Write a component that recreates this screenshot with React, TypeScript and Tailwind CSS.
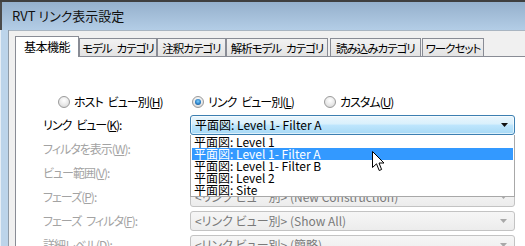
import React from 'react';

const jp = "font-['Noto_Sans_CJK_JP','Noto_Sans',sans-serif] [font-feature-settings:'palt']";

interface Tab {
  label: string;
  cls: string;
  active?: boolean;
}

const tabs: Tab[] = [
  { label: '基本機能', cls: 'w-[64px]', active: true },
  { label: 'モデル カテゴリ', cls: 'w-[78px]' },
  { label: '注釈カテゴリ', cls: 'w-[69px]' },
  { label: '解析モデル カテゴリ', cls: 'w-[102px]' },
  { label: '読み込みカテゴリ', cls: 'w-[91px] ml-[2px]' },
  { label: 'ワークセット', cls: 'w-[62px] ml-[1px]' },
];

const listItems = [
  '平面図: Level 1',
  '平面図: Level 1- Filter A',
  '平面図: Level 1- Filter B',
  '平面図: Level 2',
  '平面図: Site',
];

// tight kana text keeps a visible gap where the label has a space
const Spaced = ({ text }: { text: string }) => (
  <>
    {text.split(' ').map((part, i) => (
      <React.Fragment key={i}>
        {i > 0 && <span className="inline-block w-[5px]" />}
        {part}
      </React.Fragment>
    ))}
  </>
);

const Radio = ({ checked, label, keyChar, width }: { checked?: boolean; label: string; keyChar: string; width: string }) => (
  <div className={`flex items-center ${width}`}>
    <span className="w-[12px] h-[12px] rounded-full border border-[#9a9a9a] bg-[radial-gradient(circle_at_50%_35%,#ffffff_0%,#e8e8e8_55%,#cfcfcf_100%)] flex items-center justify-center shrink-0">
      {checked && (
        <span className="w-[6px] h-[6px] rounded-full bg-[radial-gradient(circle_at_50%_40%,#7fd0ff_0%,#2a7fc6_55%,#0f3e6e_100%)]" />
      )}
    </span>
    <span className="ml-[4px] leading-[13px] tracking-[-1px] whitespace-nowrap">
      <Spaced text={label} />(<u>{keyChar}</u>)
    </span>
  </div>
);

const Label = ({ text, keyChar, disabled }: { text: string; keyChar: string; disabled?: boolean }) => (
  <div className={`w-[147px] leading-[20px] tracking-[-1px] whitespace-nowrap ${disabled ? 'text-[#a3a3a3]' : 'text-black'}`}>
    <Spaced text={text} />(<u>{keyChar}</u>):
  </div>
);

const DisabledCombo = ({ text }: { text: string }) => (
  <div className="w-[325px] h-[20px] rounded-[3px] border border-[#c3c3c3] bg-[linear-gradient(to_bottom,#f6f6f6,#ececec)] flex items-center pl-[4px] pr-[6px] text-[#7a7a7a]">
    <span className="flex-1 leading-[18px] whitespace-nowrap">{text}</span>
    <svg width="8" height="5" viewBox="0 0 8 5">
      <path d="M0 0 H7 L3.5 4 Z" fill="#a8a8a8" />
    </svg>
  </div>
);

const Row = ({ children }: { children: React.ReactNode }) => <div className="flex h-[20px]">{children}</div>;

export default function App() {
  return (
    <div className={`w-[525px] h-[246px] overflow-hidden bg-[#f0f0f0] text-[12px] text-black relative ${jp}`}>
      {/* title bar */}
      <div className="h-[2px] bg-[#3f3f3f]" />
      <div className="h-[28px] bg-[linear-gradient(to_bottom,#95b0cc,#b3cde6)] border-l-2 border-[#4a4a4a] flex items-center pl-[10px]">
        <span className="text-[13px] leading-[16px] text-[#111]">RVT リンク表示設定</span>
      </div>

      <div className="flex h-[216px]">
        {/* left frame */}
        <div className="w-[9px] bg-[#bcd4ea] border-l border-[#e6eef6] border-r border-r-[#8f9ba7]" />

        {/* client */}
        <div className="flex-1 flex flex-col border-t border-[#a9b5c1] pt-[5px] pl-[6px]">
          {/* tabs */}
          <div className="flex items-end h-[20px]">
            {tabs.map((t) =>
              t.active ? (
                <div
                  key={t.label}
                  className={`${t.cls} h-[21px] mb-[-1px] relative z-10 bg-white border border-b-0 border-[#898c95] flex items-center justify-center leading-[14px] tracking-[-0.5px]`}
                >
                  {t.label}
                </div>
              ) : (
                <div
                  key={t.label}
                  className={`${t.cls} h-[18px] bg-[linear-gradient(to_bottom,#f2f2f2,#e3e3e3)] border border-b-0 border-[#898c95] flex items-center justify-center text-[11.5px] leading-[14px] tracking-[-1px] whitespace-nowrap`}
                >
                  <span>
                    <Spaced text={t.label} />
                  </span>
                </div>
              )
            )}
          </div>

          {/* panel */}
          <div className="flex-1 bg-white border-l border-t border-[#898c95] pl-[27px] pt-[38px]">
            <div className="flex h-[13px] ml-[15px]">
              <Radio label="ホスト ビュー別" keyChar="H" width="w-[134px]" />
              <Radio checked label="リンク ビュー別" keyChar="L" width="w-[132px]" />
              <Radio label="カスタム" keyChar="U" width="w-[80px]" />
            </div>

            <div className="flex flex-col gap-[4px] mt-[7px]">
              <Row>
                <Label text="リンク ビュー" keyChar="K" />
                <div className="relative z-20">
                  <div className="w-[325px] h-[20px] rounded-[3px] border border-[#3c7fb1] bg-[linear-gradient(to_bottom,#eaf6fd_0%,#d9f0fc_45%,#bee6fd_50%,#a7d9f5_100%)] shadow-[inset_0_0_0_1px_rgba(255,255,255,0.6)] flex items-center pl-[4px] pr-[5px]">
                    <span className="flex-1 leading-[18px] whitespace-nowrap">平面図: Level 1- Filter A</span>
                    <svg width="8" height="5" viewBox="0 0 8 5">
                      <path d="M0 0 H7 L3.5 4 Z" fill="#111" />
                    </svg>
                  </div>
                  {/* popup list */}
                  <div className="absolute left-0 top-full w-[325px] bg-white border border-t-0 border-[#a8a8a8] pt-[1px] px-[1px]">
                    {listItems.map((it, i) => (
                      <div
                        key={it}
                        className={`h-[12px] leading-[12px] pl-[2px] whitespace-nowrap ${
                          i === 1 ? 'bg-[#3399ff] text-white' : 'text-black'
                        }`}
                      >
                        {it}
                      </div>
                    ))}
                  </div>
                </div>
              </Row>
              <Row>
                <Label text="フィルタを表示" keyChar="W" disabled />
                <DisabledCombo text="<リンク ビュー別> (なし)" />
              </Row>
              <Row>
                <Label text="ビュー範囲" keyChar="V" disabled />
                <DisabledCombo text="<リンク ビュー別>" />
              </Row>
              <Row>
                <Label text="フェーズ" keyChar="P" disabled />
                <DisabledCombo text="<リンク ビュー別> (New Construction)" />
              </Row>
              <Row>
                <Label text="フェーズ フィルタ" keyChar="F" disabled />
                <DisabledCombo text="<リンク ビュー別> (Show All)" />
              </Row>
              <Row>
                <Label text="詳細レベル" keyChar="D" disabled />
                <DisabledCombo text="<リンク ビュー別> (簡略)" />
              </Row>
            </div>
          </div>
        </div>
      </div>

      {/* mouse cursor */}
      <svg className="absolute left-[372px] top-[151px] z-30" width="13" height="21" viewBox="0 0 13 21">
        <path d="M0.5 0.5 L0.5 16.5 L4.5 12.8 L7.2 19.5 L9.6 18.5 L7 12 L12 12 Z" fill="#fff" stroke="#000" strokeWidth="1" strokeLinejoin="miter" />
      </svg>
    </div>
  );
}
